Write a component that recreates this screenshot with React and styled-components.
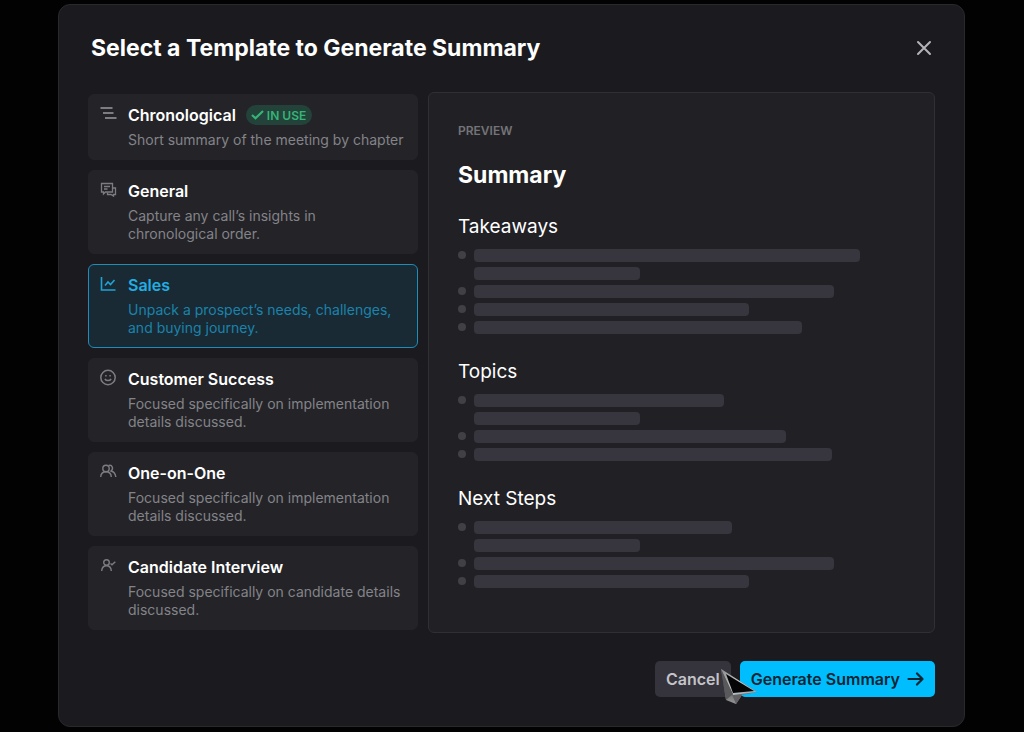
import React, { useState } from "react";
import styled, { createGlobalStyle, css } from "styled-components";

const GlobalStyle = createGlobalStyle`
  *, *::before, *::after { box-sizing: border-box; }
  body {
    margin: 0;
    background: #020203;
    color: #fff;
    font-family: Inter, "Liberation Sans", sans-serif;
  }
  h1, h2, h3, p, ul, fieldset { margin: 0; padding: 0; }
  button { font: inherit; border: 0; cursor: pointer; }
`;

const Page = styled.main`
  padding: 4px 59px 5px 58px;
`;

const Dialog = styled.section`
  padding: 24px 29px 29px;
  border: 1px solid #29292d;
  border-radius: 12px;
  background: #1b1b1f;
`;

const Header = styled.header`
  display: flex;
  align-items: center;
  justify-content: space-between;
  height: 38px;
  padding: 0 3px;
`;

const Title = styled.h1`
  font-size: 23px;
  line-height: 32px;
  font-weight: 700;
`;

const CloseButton = styled.button`
  display: flex;
  padding: 0;
  background: none;
  color: #b4b4b7;
`;

const Body = styled.div`
  display: flex;
  gap: 10px;
  margin-top: 25px;
`;

const TemplateList = styled.fieldset`
  display: flex;
  flex-direction: column;
  flex: 0 0 330px;
  gap: 10px;
  min-width: 0;
  padding-top: 2px;
  border: 0;
`;

const HiddenRadio = styled.input`
  appearance: none;
  position: absolute;
  width: 1px;
  height: 1px;
  margin: 0;
  opacity: 0;
`;

const TemplateCard = styled.label`
  display: flex;
  gap: 11px;
  padding: 9px 11px 10px;
  border: 1px solid ${(p) => (p.$active ? "#1e8db8" : "#242428")};
  border-radius: 6px;
  background: ${(p) => (p.$active ? "#192a34" : "#242428")};
  color: ${(p) => (p.$active ? "#22aee2" : "#fff")};
  cursor: pointer;
`;

const IconSlot = styled.span`
  display: flex;
  flex: none;
  width: 17px;
  padding-top: 1px;
  color: ${(p) => (p.$active ? "#1fa3d4" : "#7d7d81")};
`;

const CardText = styled.span`
  display: flex;
  flex-direction: column;
  flex: 1;
  gap: 5px;
`;

const CardTitle = styled.span`
  display: flex;
  align-items: center;
  gap: 10px;
  height: 22px;
  font-size: 16px;
  font-weight: 600;
`;

const CardDescription = styled.span`
  font-size: 14px;
  line-height: 18px;
  color: ${(p) => (p.$active ? "#1b83ab" : "#838388")};
`;

const Badge = styled.span`
  display: inline-flex;
  align-items: center;
  gap: 3px;
  height: 20px;
  padding: 0 6px 0 5px;
  border-radius: 10px;
  background: #234239;
  color: #35b477;
  font-size: 12px;
  font-weight: 600;
`;

const Preview = styled.section`
  flex: 1;
  min-width: 0;
  padding: 30px 29px 42px;
  border: 1px solid #2f2f34;
  border-radius: 6px;
  background: #212125;
`;

const PreviewLabel = styled.p`
  font-size: 12px;
  line-height: 16px;
  font-weight: 600;
  color: #747478;
`;

const PreviewTitle = styled.h2`
  margin-top: 20px;
  font-size: 23px;
  line-height: 32px;
  font-weight: 700;
`;

const PreviewSection = styled.section`
  margin-top: 24px;
`;

const SectionTitle = styled.h3`
  font-size: 19px;
  line-height: 24px;
  font-weight: 400;
`;

const Lines = styled.ul`
  margin-top: 7px;
  list-style: none;
`;

const Line = styled.li`
  display: flex;
  align-items: center;
  gap: 8px;
  height: 18px;
`;

const Bullet = styled.span`
  flex: none;
  width: 8px;
  height: 8px;
  border-radius: 50%;
  background: ${(p) => (p.$shown ? "#414045" : "transparent")};
`;

const Bar = styled.span`
  width: ${(p) => p.$width}px;
  height: 13px;
  border-radius: 4px;
  background: #37353d;
`;

const Footer = styled.footer`
  position: relative;
  display: flex;
  justify-content: flex-end;
  gap: 9px;
  margin-top: 28px;
`;

const Button = styled.button`
  display: flex;
  align-items: center;
  gap: 7px;
  height: 36px;
  padding: 0 11px;
  border-radius: 5px;
  font-size: 16px;
  font-weight: 600;
  ${(p) =>
    p.$primary
      ? css`
          background: #00bdfe;
          color: #0a2532;
        `
      : css`
          background: #35343c;
          color: #c4c4c8;
        `}
`;

const Pointer = styled.svg`
  position: absolute;
  top: 7px;
  right: 177px;
  pointer-events: none;
`;

function Icon({ children, width = 1.3 }) {
  return (
    <svg width="17" height="18" viewBox="0 0 17 18" fill="none" stroke="currentColor" strokeWidth={width} aria-hidden="true">
      {children}
    </svg>
  );
}

const icons = {
  chronological: (
    <Icon width={1.9}>
      <path d="M.5 3h12M3 8h10.500M5 13h11.500" />
    </Icon>
  ),
  general: (
    <Icon width={1.3}>
      <path d="M1.500 2.500h11v8.500H5.500L3.500 13v-2h-2zM4 5.500h6M4 8h3.500" />
      <path d="M12.500 7H15.500v6.500H13.500V15l-2.500-1.500H7.500v-2" />
    </Icon>
  ),
  sales: (
    <Icon width={1.6}>
      <path d="M1.500 2v13h14M5 10.500l3-3.500 2.500 2.500L14.500 5" />
    </Icon>
  ),
  success: (
    <Icon width={1.5}>
      <circle cx="8" cy="8.500" r="7.200" />
      <path d="M4.900 9.800c1.200 2.400 5 2.400 6.200 0M5.900 6v1.600M10.100 6v1.600" />
    </Icon>
  ),
  oneOnOne: (
    <Icon width={1.4}>
      <circle cx="6" cy="5.500" r="3.200" />
      <path d="M.7 14c.2-3.500 2.500-5.300 5.300-5.300s5.100 1.800 5.300 5.300M8.700 2.500c3.500-1 5.200 3.300 2.300 5.500 2.800.7 4.500 3 4.800 6" />
    </Icon>
  ),
  interview: (
    <Icon width={1.4}>
      <circle cx="6.500" cy="5.500" r="2.800" />
      <path d="M1.700 14c.2-3.500 2.200-5.200 4.800-5.200s4.600 1.700 4.800 5.200M10.500 6.500l1.500 1.300 3.300-3" />
    </Icon>
  ),
};

const templates = [
  { id: "chronological", name: "Chronological", text: "Short summary of the meeting by chapter", inUse: true },
  { id: "general", name: "General", text: "Capture any call’s insights in chronological order." },
  { id: "sales", name: "Sales", text: "Unpack a prospect’s needs, challenges, and buying journey." },
  { id: "success", name: "Customer Success", text: "Focused specifically on implementation details discussed." },
  { id: "oneOnOne", name: "One-on-One", text: "Focused specifically on implementation details discussed." },
  { id: "interview", name: "Candidate Interview", text: "Focused specifically on candidate details discussed." },
];

const sections = [
  { title: "Takeaways", lines: [[386, true], [166, false], [360, true], [275, true], [328, true]] },
  { title: "Topics", lines: [[250, true], [166, false], [312, true], [358, true]] },
  { title: "Next Steps", lines: [[258, true], [166, false], [360, true], [275, true]] },
];

export default function App() {
  const [selected, setSelected] = useState("sales");
  return (
    <>
      <GlobalStyle />
      <Page>
        <Dialog role="dialog" aria-labelledby="dialog-title">
          <Header>
            <Title id="dialog-title">Select a Template to Generate Summary</Title>
            <CloseButton type="button" aria-label="Close">
              <svg width="16" height="16" viewBox="0 0 16 16" fill="none" stroke="currentColor" strokeWidth="2" strokeLinecap="round" aria-hidden="true">
                <path d="M2 2l12 12M14 2L2 14" />
              </svg>
            </CloseButton>
          </Header>

          <Body>
            <TemplateList aria-label="Template">
              {templates.map((t) => {
                const active = t.id === selected;
                return (
                  <TemplateCard key={t.id} $active={active}>
                    <HiddenRadio type="radio" name="template" value={t.id} checked={active} onChange={() => setSelected(t.id)} />
                    <IconSlot $active={active}>{icons[t.id]}</IconSlot>
                    <CardText>
                      <CardTitle>
                        {t.name}
                        {t.inUse && (
                          <Badge>
                            <svg width="13" height="12" viewBox="0 0 13 12" fill="none" stroke="currentColor" strokeWidth="2.200" aria-hidden="true">
                              <path d="M1 6l3.500 3.300L12 2" />
                            </svg>
                            IN USE
                          </Badge>
                        )}
                      </CardTitle>
                      <CardDescription $active={active}>{t.text}</CardDescription>
                    </CardText>
                  </TemplateCard>
                );
              })}
            </TemplateList>

            <Preview>
              <PreviewLabel>PREVIEW</PreviewLabel>
              <PreviewTitle>Summary</PreviewTitle>
              {sections.map((s) => (
                <PreviewSection key={s.title}>
                  <SectionTitle>{s.title}</SectionTitle>
                  <Lines>
                    {s.lines.map(([width, bullet], n) => (
                      <Line key={n}>
                        <Bullet $shown={bullet} />
                        <Bar $width={width} />
                      </Line>
                    ))}
                  </Lines>
                </PreviewSection>
              ))}
            </Preview>
          </Body>

          <Footer>
            <Button type="button">Cancel</Button>
            <Button type="button" $primary>
              Generate Summary
              <svg width="17" height="16" viewBox="0 0 17 16" fill="none" stroke="currentColor" strokeWidth="2.200" strokeLinecap="round" strokeLinejoin="round" aria-hidden="true">
                <path d="M1.500 8h14M10 2.500L15.500 8 10 13.500" />
              </svg>
            </Button>
            <Pointer width="38" height="38" viewBox="0 0 38 38" aria-hidden="true">
              <defs>
                <linearGradient id="pointer-side" x1="0" y1="0" x2="0" y2="1">
                  <stop offset="0" stopColor="#77777a" />
                  <stop offset="0.350" stopColor="#404043" />
                  <stop offset="1" stopColor="#98989a" />
                </linearGradient>
                <linearGradient id="pointer-edge" x1="0" y1="0" x2="1" y2="1">
                  <stop offset="0" stopColor="#8a8a8c" />
                  <stop offset="0.500" stopColor="#c4c8ca" />
                  <stop offset="1" stopColor="#8fa6ae" />
                </linearGradient>
              </defs>
              <path d="M1 1l5 31 10 4 6-9 15-3z" fill="url(#pointer-side)" />
              <path d="M1 1l15 35 6-9-8-3z" fill="#626265" />
              <path d="M1 1l36 23-24 3z" fill="url(#pointer-edge)" />
              <path d="M6 6l28 17-21 2z" fill="#050506" />
              <path d="M1 1l5 31 7-6z" fill="#59595c" />
            </Pointer>
          </Footer>
        </Dialog>
      </Page>
    </>
  );
}
